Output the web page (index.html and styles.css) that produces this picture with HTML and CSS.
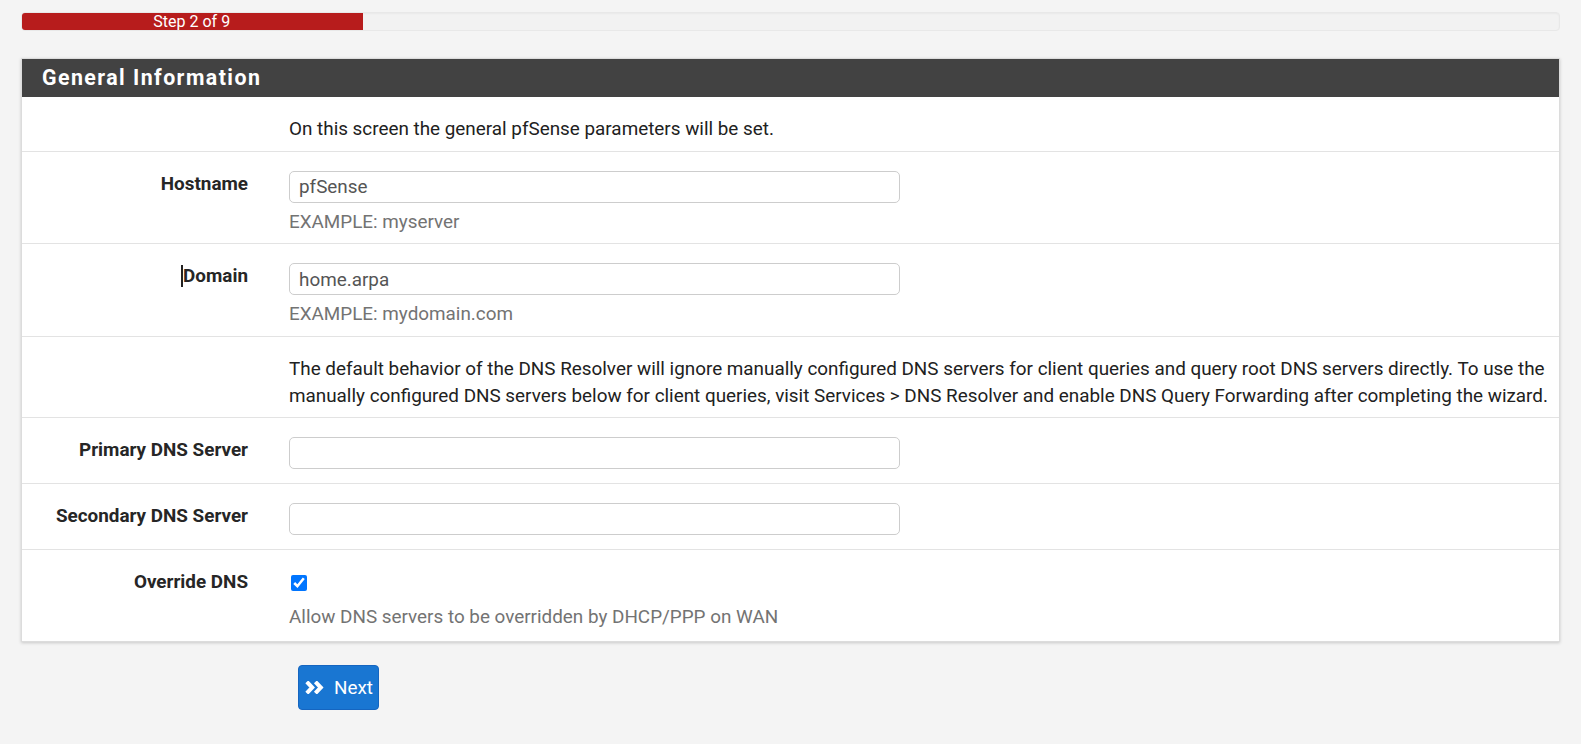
FILE: index.html
```html
<!DOCTYPE html>
<html lang="en">
<head>
<meta charset="utf-8">
<title>pfSense Setup Wizard</title>
<link rel="stylesheet" href="styles.css">
</head>
<body>
<div class="wizard">
  <div class="progress">
    <div class="progress-bar" style="width:22.22%">Step 2 of 9</div>
  </div>

  <div class="panel">
    <div class="panel-heading">
      <h2 class="panel-title">General Information</h2>
    </div>
    <div class="panel-body">
      <div class="form-row">
        <div class="form-label"></div>
        <div class="form-field">
          <p class="note">On this screen the general pfSense parameters will be set.</p>
        </div>
      </div>

      <div class="form-row">
        <label class="form-label" for="hostname">Hostname</label>
        <div class="form-field">
          <input class="form-control" id="hostname" type="text" value="pfSense">
          <span class="help">EXAMPLE: myserver</span>
        </div>
      </div>

      <div class="form-row">
        <label class="form-label" for="domain"><span class="caret"></span>Domain</label>
        <div class="form-field">
          <input class="form-control" id="domain" type="text" value="home.arpa">
          <span class="help">EXAMPLE: mydomain.com</span>
        </div>
      </div>

      <div class="form-row">
        <div class="form-label"></div>
        <div class="form-field">
          <p class="note">The default behavior of the DNS Resolver will ignore manually configured DNS servers for client queries and query root DNS servers directly. To use the manually configured DNS servers below for client queries, visit Services &gt; DNS Resolver and enable DNS Query Forwarding after completing the wizard.</p>
        </div>
      </div>

      <div class="form-row">
        <label class="form-label" for="dns1">Primary DNS Server</label>
        <div class="form-field">
          <input class="form-control" id="dns1" type="text" value="">
        </div>
      </div>

      <div class="form-row">
        <label class="form-label" for="dns2">Secondary DNS Server</label>
        <div class="form-field">
          <input class="form-control" id="dns2" type="text" value="">
        </div>
      </div>

      <div class="form-row form-row-last">
        <label class="form-label" for="override">Override DNS</label>
        <div class="form-field">
          <div class="check-line">
            <input class="check" id="override" type="checkbox" checked>
          </div>
          <span class="help">Allow DNS servers to be overridden by DHCP/PPP on WAN</span>
        </div>
      </div>
    </div>
  </div>

  <div class="actions">
    <button class="btn-next" type="button">
      <svg class="btn-icon" width="19" height="13" viewBox="0 0 19 13" aria-hidden="true">
        <path d="M1.8 0.8 L7.2 6.5 L1.8 12.2 M10.4 0.8 L15.8 6.5 L10.4 12.2" fill="none" stroke="#fff" stroke-width="4" stroke-linecap="butt" stroke-linejoin="miter"/>
      </svg>
      <span>Next</span>
    </button>
  </div>
</div>
</body>
</html>
```

FILE: styles.css
```css
* {
  box-sizing: border-box;
}

html,
body {
  margin: 0;
  padding: 0;
}

body {
  background: #f4f4f4;
  font-family: Roboto, "Liberation Sans", Arial, sans-serif;
  font-size: 18.87px;
  line-height: 26.667px;
  color: #212121;
}

.wizard {
  padding: 12px 21px 20px;
}

/* step progress */
.progress {
  height: 19px;
  background: #f2f2f2;
  border: 1px solid #e8e8e8;
  border-radius: 4px;
  box-shadow: inset 0 1px 2px rgba(0, 0, 0, 0.04);
  overflow: hidden;
  display: flex;
}

.progress-bar {
  margin: -1px 0 0 -1px;
  height: 19px;
  background: #b71c1c;
  color: #fff;
  font-size: 16px;
  line-height: 19px;
  text-align: center;
}

/* panel */
.panel {
  margin-top: 27px;
  background: #fff;
  border: 1px solid #dcdcdc;
  box-shadow: 0 1px 3px rgba(0, 0, 0, 0.18);
}

.panel-heading {
  background: #424242;
  height: 38px;
  display: flex;
  align-items: center;
  padding: 0 20px;
}

.panel-title {
  margin: 0;
  color: #fff;
  font-size: 21.333px;
  font-weight: 700;
  letter-spacing: 1.45px;
  line-height: 1;
}

.form-row {
  display: grid;
  grid-template-columns: 226px 1fr;
  column-gap: 41px;
  padding: 19px 0 8px 0;
  border-bottom: 1px solid #e3e3e3;
}

.form-row-last {
  border-bottom: 0;
  padding-bottom: 10px;
}

.form-label {
  display: block;
  text-align: right;
  font-weight: 700;
  color: #262626;
}

.form-field {
  min-width: 0;
}

.note {
  margin: 0;
}

.form-control {
  display: block;
  width: 611px;
  height: 32px;
  margin: 0 0 6px;
  padding: 0 9px;
  border: 1px solid #cdcdcd;
  border-radius: 5px;
  background: #fff;
  font-family: inherit;
  font-size: 18.87px;
  color: #555;
  outline: none;
}

.help {
  display: block;
  color: #737373;
}

.check-line {
  height: 26.667px;
  margin-bottom: 8px;
  display: flex;
  align-items: center;
}

.check {
  width: 16px;
  height: 16px;
  margin: 0 0 0 2px;
  accent-color: #0075ff;
}

/* text cursor resting in the Domain label */
.caret {
  display: inline-block;
  width: 2px;
  height: 22px;
  background: #222;
  vertical-align: -5px;
}

/* wizard navigation */
.actions {
  padding: 23px 0 0 277px;
}

.btn-next {
  display: inline-flex;
  align-items: center;
  gap: 10px;
  height: 45px;
  padding: 0 5px 0 6px;
  border: 1px solid #1565c0;
  border-radius: 4px;
  background: #1976d2;
  color: #fff;
  font-family: inherit;
  font-size: 18.87px;
  font-weight: 400;
  cursor: pointer;
}

.btn-icon {
  display: block;
}
```
